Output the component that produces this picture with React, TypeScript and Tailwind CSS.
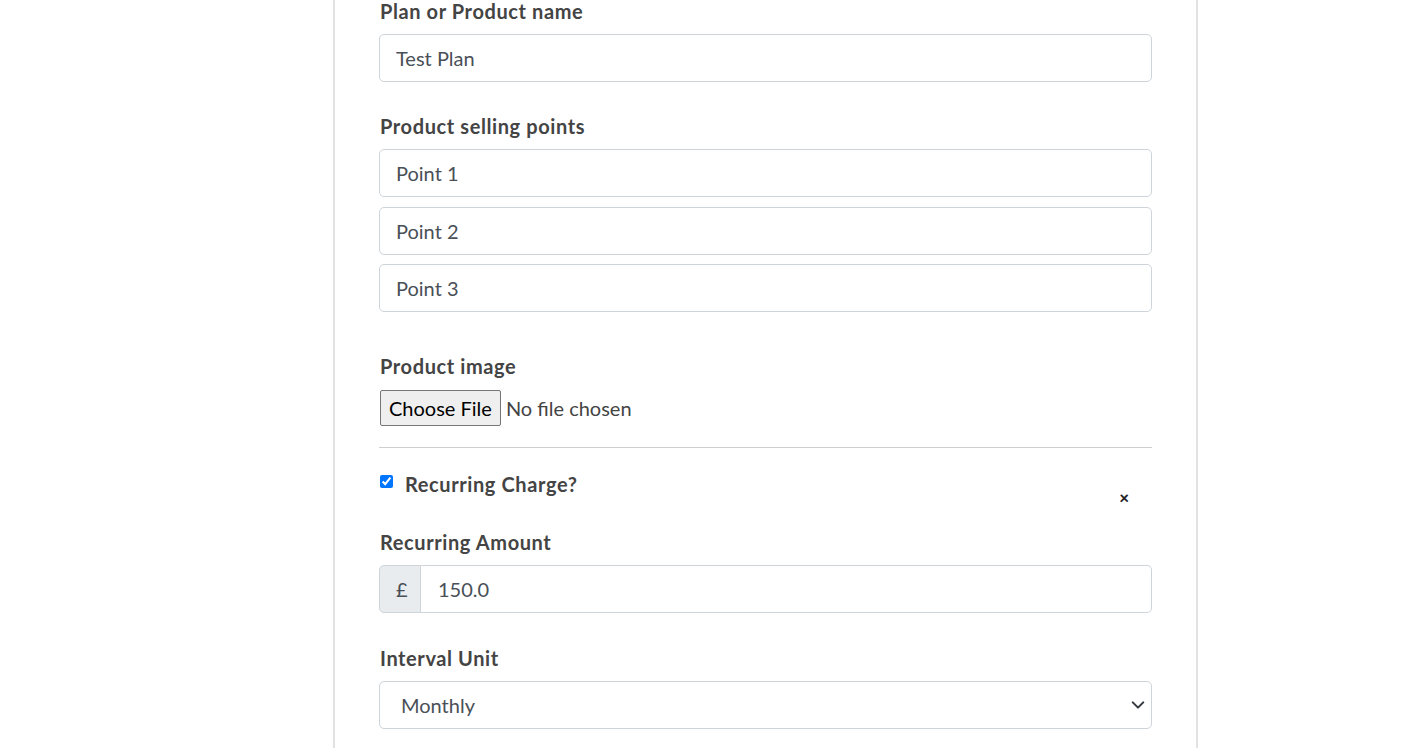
import { useState } from 'react';

const labelCls = 'block pl-[1px] text-[20px] leading-[30px] font-bold tracking-[0.6px] text-[#444] mb-2';
const inputCls =
  'block w-full h-[48px] px-4 text-[20px] text-[#495057] bg-white border border-[#ced4da] rounded-[5px] outline-none';

export default function App() {
  const [recurring, setRecurring] = useState(true);
  const points = ['Point 1', 'Point 2', 'Point 3'];

  return (
    <div className="min-h-[752px] bg-white font-['Lato','Liberation_Sans',sans-serif] overflow-hidden">
      <div className="ml-[333px] w-[865px] min-h-[752px] border-x-2 border-[#e2e2e2] px-[44px]">
        <label className={labelCls + ' -mt-[4px]'}>Plan or Product name</label>
        <input className={inputCls} defaultValue="Test Plan" />

        <label className={labelCls + ' mt-[29px]'}>Product selling points</label>
        <div className="flex flex-col gap-[9.5px]">
          {points.map((p) => (
            <input key={p} className={inputCls} defaultValue={p} />
          ))}
        </div>

        <label className={labelCls + ' mt-[39px] mb-[9px]'}>Product image</label>
        <input
          type="file"
          className="block ml-[1px] text-[20px] leading-[30px] text-[#444] file:h-[36px] file:px-[8px] file:mr-[5px] file:bg-[#efefef] file:text-black file:border file:border-[#767676] file:rounded-[2px]"
        />

        <hr className="mt-[21px] border-0 border-t border-[#cfcfcf]" />

        <div className="mt-[21px] h-[38px] flex justify-between">
          <label className="flex items-start gap-3">
            <input
              type="checkbox"
              checked={recurring}
              onChange={(e) => setRecurring(e.target.checked)}
              className="mt-[6px] ml-[1px] w-[13px] h-[13px] accent-[#0075ff]"
            />
            <span className="text-[20px] leading-[30px] font-bold tracking-[0.6px] text-[#444]">Recurring Charge?</span>
          </label>
          <button type="button" className="mt-[20px] mr-[23px] text-[17px] leading-[18px] font-black text-[#222]">
            ×
          </button>
        </div>

        <label className={labelCls + ' mt-[20px]'}>Recurring Amount</label>
        <div className="flex h-[48px]">
          <span className="flex items-center pl-[16px] w-[42px] text-[20px] text-[#495057] bg-[#e9ecef] border border-[#ced4da] rounded-l-[5px]">
            £
          </span>
          <input
            className="flex-1 pl-[17px] pr-4 text-[20px] text-[#495057] bg-white border border-l-0 border-[#ced4da] rounded-r-[5px] outline-none"
            defaultValue="150.0"
          />
        </div>

        <label className={labelCls + ' mt-[30px]'}>Interval Unit</label>
        <div className="relative">
          <select
            defaultValue="monthly"
            className="block w-full h-[48px] pl-[21px] pr-10 text-[20px] text-[#495057] bg-white border border-[#ced4da] rounded-[5px] appearance-none outline-none"
          >
            <option value="weekly">Weekly</option>
            <option value="monthly">Monthly</option>
            <option value="yearly">Yearly</option>
          </select>
          <svg
            className="absolute right-[7px] top-1/2 -translate-y-1/2 pointer-events-none"
            width="14"
            height="14"
            viewBox="0 0 16 16"
          >
            <path d="M2 5l6 6 6-6" fill="none" stroke="#343a40" strokeWidth="2.4" strokeLinecap="round" strokeLinejoin="round" />
          </svg>
        </div>
      </div>
    </div>
  );
}
